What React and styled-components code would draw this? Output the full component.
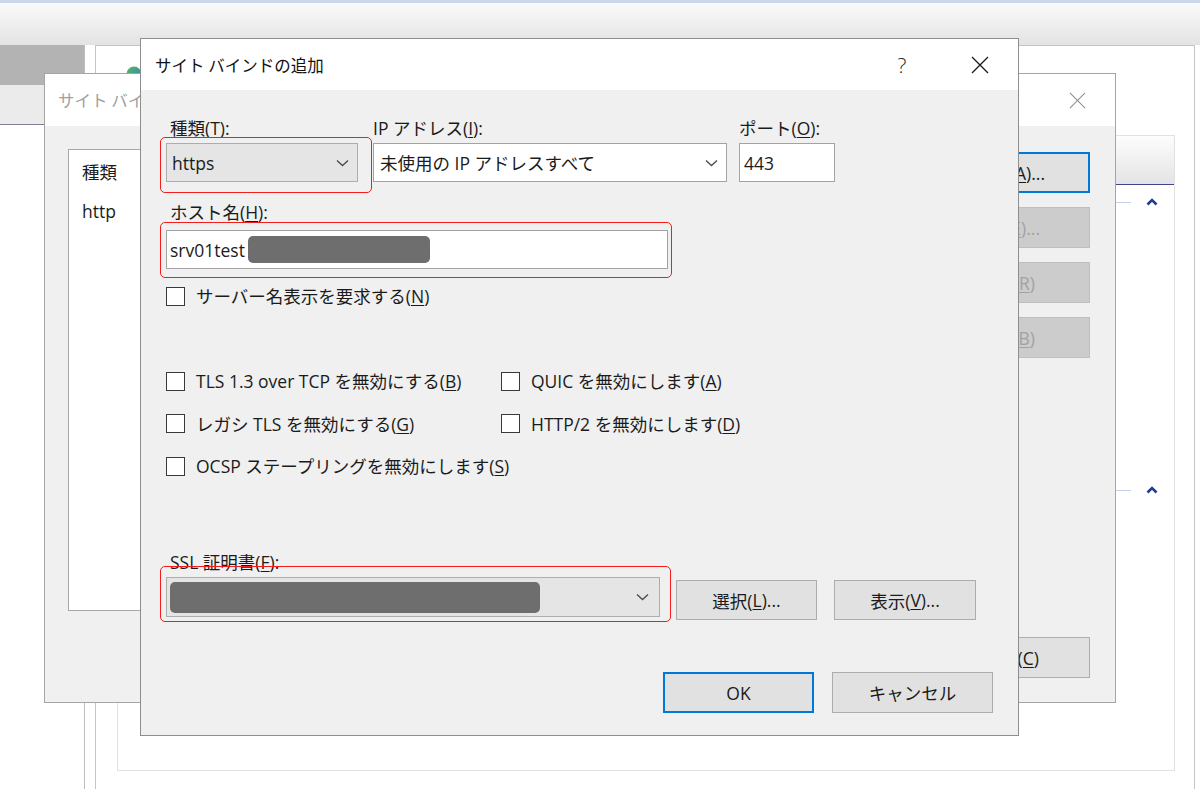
import React from 'react';
import styled, { createGlobalStyle } from 'styled-components';

const GlobalStyle = createGlobalStyle`
  html, body { margin: 0; padding: 0; background: #fff; }
  body {
    font-family: "Open Sans", "Noto Sans CJK JP", sans-serif;
    font-size: 17.5px;
    color: #1b1b1b;
  }
  * { box-sizing: border-box; }
  u { text-underline-offset: 2px; text-decoration-thickness: 1px; }
`;

const Desktop = styled.div`
  position: relative;
  width: 1200px;
  height: 789px;
  overflow: hidden;
  background: #fff;
`;

const TopBar = styled.div`
  height: 45px;
  border-top: 3px solid #cad8ea;
  background: linear-gradient(#fafafa, #e3e3e3);
`;

/* ---------- background panes ---------- */

const LeftPane = styled.div`
  position: absolute;
  left: 0;
  top: 45px;
  width: 85px;
  bottom: 0;
  border-right: 1px solid #bdbdbd;
  display: flex;
  flex-direction: column;
`;

const PaneHead = styled.div`
  height: 40px;
  background: #b3b3b3;
`;

const PaneStrip = styled.div`
  height: 40px;
  background: #ebebeb;
  border-bottom: 1px solid #7e7e9c;
`;

const OuterPanel = styled.div`
  position: absolute;
  left: 95px;
  top: 45px;
  right: 5px;
  bottom: -4px;
  background: #fff;
  border: 1px solid #c4c4c4;
  padding: 20px 0 0 21px;
`;

const Globe = styled.svg`
  display: block;
  margin-left: 9px;
  width: 16px;
  height: 16px;
`;

const InnerBox = styled.div`
  margin-top: 53px;
  width: 1058px;
  height: 636px;
  border: 1px solid #e2e2e2;
  display: flex;
  flex-direction: column;
`;

const ListHeader = styled.div`
  height: 49px;
  background: linear-gradient(#fdfdfd, #e4e4e4);
  border-bottom: 1px solid #40448e;
`;

const GroupRow = styled.div`
  display: flex;
  align-items: center;
  height: 20px;
  margin-top: ${p => p.$mt}px;
  padding-right: 16px;
  gap: 15px;
`;

const GroupLine = styled.div`
  flex: 1;
  height: 1px;
  background: #c3d4ea;
`;

/* ---------- generic window ---------- */

const Window = styled.div`
  position: absolute;
  left: ${p => p.$x}px;
  top: ${p => p.$y}px;
  width: ${p => p.$w}px;
  height: ${p => p.$h}px;
  display: flex;
  flex-direction: column;
  background: #f0f0f0;
  border: 1px solid ${p => p.$border};
`;

const TitleBar = styled.div`
  height: ${p => p.$h}px;
  flex: none;
  background: #fff;
  display: flex;
  align-items: center;
  padding-left: ${p => p.$pl}px;
  padding-right: ${p => p.$pr}px;
  color: ${p => (p.$inactive ? '#a0a0a0' : '#111')};
  font-size: 16.5px;
`;

const TitleText = styled.div`
  flex: 1;
  white-space: nowrap;
  font-family: "Noto Sans CJK JP", sans-serif;
`;

const TitleButton = styled.div`
  width: ${p => p.$w}px;
  height: 34px;
  display: flex;
  align-items: center;
  justify-content: center;
  margin-left: ${p => p.$ml || 0}px;
  font-size: 21px;
  font-weight: 300;
  color: #222;
`;

/* ---------- back dialog ---------- */

const BackBody = styled.div`
  flex: 1;
  display: flex;
  padding: 23px 25px 24px 23px;
`;

const ListBox = styled.div`
  width: 760px;
  height: 462px;
  background: #fff;
  border: 1px solid #a8a8a8;
  padding: 12px 13px;
  display: flex;
  flex-direction: column;
  gap: 19px;
  line-height: 20px;
`;

const ButtonCol = styled.div`
  margin-left: auto;
  margin-top: 3px;
  width: 150px;
  display: flex;
  flex-direction: column;
  gap: 14px;
`;

const BackButton = styled.div`
  height: 41px;
  display: flex;
  align-items: center;
  justify-content: flex-end;
  padding-right: ${p => p.$pr}px;
  white-space: nowrap;
  margin-top: ${p => (p.$bottom ? 'auto' : '0')};
  background: ${p => (p.$disabled ? '#cccccc' : '#e1e1e1')};
  color: ${p => (p.$disabled ? '#a2a2a2' : '#1b1b1b')};
  border: ${p => (p.$default ? '2px solid #0078d7' : p.$disabled ? '1px solid #bfbfbf' : '1px solid #adadad')};
`;

/* ---------- main dialog ---------- */

const Body = styled.div`
  flex: 1;
  display: flex;
  flex-direction: column;
  padding: 28px 25px 22px 25px;
`;

const Row = styled.div`
  display: flex;
  align-items: flex-start;
  margin-top: ${p => p.$mt || 0}px;
`;

const Field = styled.div`
  width: ${p => p.$w}px;
  margin-left: ${p => p.$ml || 0}px;
  display: flex;
  flex-direction: column;
`;

const Label = styled.div`
  line-height: 20px;
  height: 20px;
  white-space: nowrap;
  padding-left: ${p => (p.$inset === undefined ? 4 : p.$inset)}px;
  margin-bottom: ${p => p.$mb || 5}px;
`;

const Highlight = styled.div`
  position: relative;
  &::after {
    content: '';
    position: absolute;
    top: -${p => p.$t}px;
    right: -${p => p.$r}px;
    bottom: -${p => p.$b}px;
    left: -${p => p.$l}px;
    border: 1.5px solid #f41c1c;
    border-radius: 5px;
    pointer-events: none;
  }
`;

const Combo = styled.div`
  height: ${p => p.$h || 39}px;
  display: flex;
  align-items: center;
  background: ${p => (p.$editable ? '#fff' : '#e5e5e5')};
  border: 1px solid ${p => (p.$editable ? '#a3a3a3' : '#adadad')};
  padding-left: ${p => p.$pl || 5}px;
  padding-right: ${p => p.$pr || 8}px;
  white-space: nowrap;
`;

const ComboText = styled.span`
  flex: 1;
  display: flex;
  align-items: center;
`;

const TextBox = styled.div`
  height: 39px;
  display: flex;
  align-items: center;
  background: #fff;
  border: 1px solid #a3a3a3;
  padding-left: ${p => p.$pl || 3}px;
  white-space: nowrap;
`;

const Redacted = styled.span`
  display: inline-block;
  width: ${p => p.$w}px;
  height: ${p => p.$h}px;
  margin-left: ${p => p.$ml || 0}px;
  background: #6e6e6e;
  border-radius: 5px;
`;

const CheckRow = styled.label`
  display: flex;
  align-items: center;
  gap: 11px;
  height: 20px;
  line-height: 20px;
  white-space: nowrap;
  margin-top: ${p => p.$mt || 0}px;
`;

const Box = styled.span`
  width: 19px;
  height: 19px;
  flex: none;
  background: #fff;
  border: 1.5px solid #3a3a3a;
`;

const OptionGrid = styled.div`
  display: grid;
  grid-template-columns: 335px auto;
  row-gap: 22.5px;
  margin-top: 65px;
`;

const PushButton = styled.div`
  width: ${p => p.$w}px;
  height: ${p => p.$h || 40}px;
  margin-left: ${p => p.$ml || 0}px;
  margin-top: ${p => p.$mt || 0}px;
  display: flex;
  align-items: center;
  justify-content: center;
  white-space: nowrap;
  background: #e1e1e1;
  border: ${p => (p.$default ? '2px solid #0078d7' : '1px solid #adadad')};
`;

const Footer = styled.div`
  margin-top: auto;
  display: flex;
  justify-content: flex-end;
  gap: 18px;
`;

const Chevron = () => (
  <svg width="13" height="8" viewBox="0 0 13 8">
    <polyline points="1,1.5 6.5,6.5 12,1.5" fill="none" stroke="#4a4a4a" strokeWidth="1.3" />
  </svg>
);

const CloseX = ({ size, color, w }) => (
  <svg width={size} height={size} viewBox="0 0 18 18">
    <path d="M1 1L17 17M17 1L1 17" stroke={color} strokeWidth={w} fill="none" />
  </svg>
);

const UpChevron = () => (
  <svg width="12" height="8" viewBox="0 0 12 8">
    <polyline points="1.5,6.5 6,2 10.5,6.5" fill="none" stroke="#1f3c94" strokeWidth="2.6" />
  </svg>
);

const Check = ({ children, mt }) => (
  <CheckRow $mt={mt}>
    <Box />
    <span>{children}</span>
  </CheckRow>
);

export default function App() {
  return (
    <>
      <GlobalStyle />
      <Desktop>
        <TopBar />

        <LeftPane>
          <PaneHead />
          <PaneStrip />
        </LeftPane>

        <OuterPanel>
          <Globe viewBox="0 0 16 16">
            <defs>
              <linearGradient id="g" x1="0" y1="0" x2="1" y2="1">
                <stop offset="0" stopColor="#5cb85c" />
                <stop offset="1" stopColor="#2a7fc8" />
              </linearGradient>
            </defs>
            <circle cx="8" cy="8" r="7.5" fill="url(#g)" />
          </Globe>
          <InnerBox>
            <ListHeader />
            <GroupRow $mt={7}>
              <GroupLine />
              <UpChevron />
            </GroupRow>
            <GroupRow $mt={268}>
              <GroupLine />
              <UpChevron />
            </GroupRow>
          </InnerBox>
        </OuterPanel>

        <Window $x={44} $y={73} $w={1072} $h={630} $border="#a5a5a5">
          <TitleBar $h={52} $pl={13} $pr={29} $inactive>
            <TitleText>サイト バインド</TitleText>
            <CloseX size={17} color="#8e8e8e" w={1.1} />
          </TitleBar>
          <BackBody>
            <ListBox>
              <div>種類</div>
              <div>http</div>
            </ListBox>
            <ButtonCol>
              <BackButton $default $pr={43}>追加(<u>A</u>)...</BackButton>
              <BackButton $disabled $pr={49}>編集(<u>E</u>)...</BackButton>
              <BackButton $disabled $pr={54}>削除(<u>R</u>)</BackButton>
              <BackButton $disabled $pr={54}>参照(<u>B</u>)</BackButton>
              <BackButton $bottom $pr={50}>閉じる(<u>C</u>)</BackButton>
            </ButtonCol>
          </BackBody>
        </Window>

        <Window $x={140} $y={38} $w={879} $h={698} $border="#8e8e8e">
          <TitleBar $h={51} $pl={14} $pr={15}>
            <TitleText>サイト バインドの追加</TitleText>
            <TitleButton $w={40}>?</TitleButton>
            <TitleButton $w={46} $ml={35}>
              <CloseX size={18} color="#1a1a1a" w={1.25} />
            </TitleButton>
          </TitleBar>

          <Body>
            <Row>
              <Field $w={192}>
                <Label>種類(<u>T</u>):</Label>
                <Highlight $t={6} $r={14} $b={11} $l={6}>
                  <Combo>
                    <ComboText>https</ComboText>
                    <Chevron />
                  </Combo>
                </Highlight>
              </Field>
              <Field $w={354} $ml={15}>
                <Label $inset={0}>IP アドレス(<u>I</u>):</Label>
                <Combo $editable $pl={6} $pr={8}>
                  <ComboText>未使用の IP アドレスすべて</ComboText>
                  <Chevron />
                </Combo>
              </Field>
              <Field $w={96} $ml={12}>
                <Label $inset={0}>ポート(<u>O</u>):</Label>
                <TextBox $pl={4}>443</TextBox>
              </Field>
            </Row>

            <Row $mt={20}>
              <Field $w={502}>
                <Label $mb={8}>ホスト名(<u>H</u>):</Label>
                <Highlight $t={8} $r={4} $b={9} $l={6}>
                  <TextBox>
                    srv01test
                    <Redacted $w={182} $h={27} $ml={3} />
                  </TextBox>
                </Highlight>
              </Field>
            </Row>

            <Check mt={17}>サーバー名表示を要求する(<u>N</u>)</Check>

            <OptionGrid>
              <Check>TLS 1.3 over TCP を無効にする(<u>B</u>)</Check>
              <Check>QUIC を無効にします(<u>A</u>)</Check>
              <Check>レガシ TLS を無効にする(<u>G</u>)</Check>
              <Check>HTTP/2 を無効にします(<u>D</u>)</Check>
              <Check>OCSP ステープリングを無効にします(<u>S</u>)</Check>
            </OptionGrid>

            <Row $mt={76}>
              <Field $w={494}>
                <Label>SSL 証明書(<u>F</u>):</Label>
                <Highlight $t={11} $r={11} $b={5} $l={6}>
                  <Combo $h={40} $pl={3} $pr={10}>
                    <ComboText>
                      <Redacted $w={370} $h={31} />
                    </ComboText>
                    <Chevron />
                  </Combo>
                </Highlight>
              </Field>
              <PushButton $w={141} $ml={16} $mt={28}>選択(<u>L</u>)...</PushButton>
              <PushButton $w={142} $ml={17} $mt={28}>表示(<u>V</u>)...</PushButton>
            </Row>

            <Footer>
              <PushButton $w={151} $h={41} $default>OK</PushButton>
              <PushButton $w={161} $h={41}>キャンセル</PushButton>
            </Footer>
          </Body>
        </Window>
      </Desktop>
    </>
  );
}
